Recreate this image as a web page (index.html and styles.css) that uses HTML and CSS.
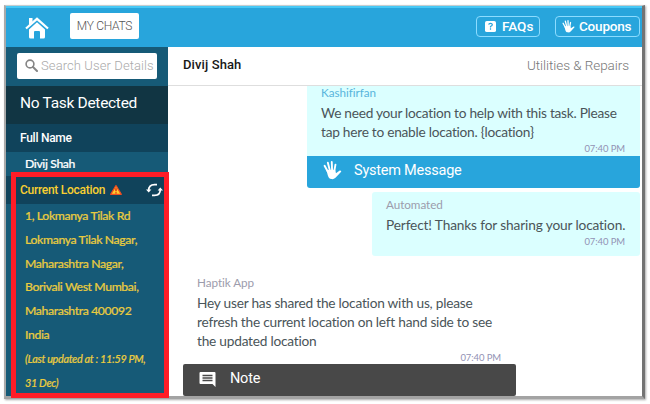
FILE: index.html
```html
<!DOCTYPE html>
<html lang="en">
<head>
<meta charset="utf-8">
<title>Chat support</title>
<link rel="stylesheet" href="styles.css">
</head>
<body>
<svg width="0" height="0" class="defs">
  <symbol id="hand" viewBox="0 0 18 18">
    <path d="M4.500 10 1.500 4.500M6.500 9 4.600 1.600M8.600 9 8.300 1M10.600 10l1.200-6.500" fill="none" stroke="currentColor" stroke-width="1.800" stroke-linecap="round"/>
    <path d="M3.200 8.600 11.500 8.300l.8 3.200 3.200-2.300c1-.6 2.400.3 1.500 1.300l-4.700 5c-1.200 1.300-2.700 1.900-4.200 1.600-2.100-.3-3-1.500-3.500-3.400z" fill="currentColor"/>
  </symbol>
</svg>
<div class="app">
  <header class="topbar">
    <svg class="home" viewBox="0 0 24 22"><path d="M1 11.500 12 1.800l11 9.700" fill="none" stroke="#fff" stroke-width="2.200"/><path d="M4 1h3.500v4L4 8zM4 12.500l8-7.200 8 7.200V20q0 1.500-1.500 1.500H15V15q0-1-1-1h-4q-1 0-1 1v6.500H5.500Q4 21.500 4 20z" fill="#fff"/></svg>
    <button class="chats"><span>MY CHATS</span></button>
    <div class="actions">
      <button class="action faq"><svg viewBox="0 0 12 12"><path d="M2 0h8q2 0 2 2v8q0 2-2 2H2q-2 0-2-2V2q0-2 2-2z" fill="#fff"/><path d="M4 4Q4.200 2.500 6 2.500T8 4Q8 4.900 6 6v1M6 8v1.500" stroke="#28a5dc" stroke-width="1.300" fill="none"/></svg><span>FAQs</span></button>
      <button class="action coupon"><svg viewBox="0 0 18 18"><use href="#hand"/></svg><span>Coupons</span></button>
    </div>
  </header>
  <div class="body">
    <aside class="sidebar">
      <div class="search-row"><div class="search"><svg viewBox="0 0 13 13"><circle cx="5" cy="5" r="3.900" fill="none" stroke="#858585" stroke-width="1.600"/><path d="m8 8 4 4" stroke="#858585" stroke-width="2" stroke-linecap="round"/></svg><span>Search User Details</span></div></div>
      <div class="task"><span>No Task Detected</span></div>
      <div class="label"><span>Full Name</span></div>
      <div class="value"><span>Divij Shah</span></div>
      <div class="label location"><span>Current Location</span>
        <svg class="warn" viewBox="0 0 12 10"><path d="M6 .7 11.300 9.300H.7z" fill="#ffcf2e" stroke="#f04d20" stroke-width="1.300" stroke-linejoin="round"/><path d="M6 3.200v3M6 7.200v1.300" stroke="#e02c15" stroke-width="1.500"/></svg>
        <svg class="refresh" viewBox="0 0 17 14"><path d="M2.700 7.500Q2.700 1.600 8.500 1.600H11M14.300 6.500Q14.300 12.400 8.500 12.400H6" fill="none" stroke="#fff" stroke-width="1.700"/><path d="M0 6.500h5.400L2.700 9.500zM11.600 7.500H17L14.300 4.500z" fill="#fff"/></svg>
      </div>
      <div class="address">
        <div><span>1, Lokmanya Tilak Rd</span></div>
        <div><span>Lokmanya Tilak Nagar,</span></div>
        <div><span>Maharashtra Nagar,</span></div>
        <div><span>Borivali West Mumbai,</span></div>
        <div><span>Maharashtra 400092</span></div>
        <div><span>India</span></div>
        <div class="updated"><span>(Last updated at : 11:59 PM,</span></div>
        <div class="updated"><span>31 Dec)</span></div>
      </div>
      <div class="highlight"></div>
    </aside>
    <main class="chat">
      <div class="chat-head"><strong>Divij Shah</strong><span class="category">Utilities &amp; Repairs</span></div>
      <div class="messages">
        <section class="message system">
          <div class="bubble"><div class="author blue">Kashifirfan</div><p>We need your location to help with this task. Please<br>tap here to enable location. {location}</p><time>07:40 PM</time></div>
          <div class="bar"><svg viewBox="0 0 18 18"><use href="#hand"/></svg><span>System Message</span></div>
        </section>
        <section class="message automated">
          <div class="author">Automated</div><p>Perfect! Thanks for sharing your location.</p><time>07:40 PM</time>
        </section>
        <section class="message note">
          <div class="author">Haptik App</div><p>Hey user has shared the location with us, please<br>refresh the current location on left hand side to see<br>the updated location</p><time>07:40 PM</time>
          <div class="bar"><svg viewBox="0 0 17 17"><path d="M1.500 1h14q1 0 1 1v14l-3-3h-12q-1 0-1-1V2q0-1 1-1z" fill="#fff"/><path d="M3.500 4.500h10M3.500 7h10M3.500 9.500h10" stroke="#484848" stroke-width="1.400"/></svg><span>Note</span></div>
        </section>
      </div>
    </main>
  </div>
</div>
</body>
</html>
```
FILE: styles.css
```css
* { box-sizing: border-box; }
body { margin: 0; width: 650px; height: 404px; padding: 5px 0 0 4px; background: #fff; overflow: hidden; font-family: Roboto, "Liberation Sans", sans-serif; }
.defs { position: absolute; }
button { font: inherit; margin: 0; padding: 0; }
span, strong { white-space: nowrap; }
.app { width: 641px; height: 394px; border: solid; border-width: 1px 3px 3px 2px; border-color: #c4cdd0 #737373 #a3a3a3 #aaa; display: flex; flex-direction: column; box-shadow: 1px 1px 2px #aaa; }
.topbar { height: 41px; flex: none; background: #28a5dc; border-top: 2px solid #48c8f5; display: flex; align-items: center; padding: 0 2px 2px 19px; }
.home { width: 24px; height: 22px; margin-top: 2px; }
.chats { width: 69px; height: 26px; margin: -2px 0 0 21px; border: 0; border-radius: 2px; background: #fff; color: #555; font-size: 12px; font-weight: 300; letter-spacing: -0.300px; }
.actions { margin-left: auto; display: flex; gap: 15px; }
.action { height: 21px; border: 1px solid #8cdcff; border-radius: 4px; background: none; color: #fff; font-size: 13.500px; font-weight: 500; display: flex; align-items: center; padding-bottom: 1px; }
.faq { width: 64px; padding-left: 8px; gap: 6px; }
.faq svg { width: 11px; height: 11px; }
.coupon { width: 85px; padding-left: 6px; gap: 4px; letter-spacing: -0.200px; }
.coupon svg { width: 13px; height: 13px; }
.body { flex: 1; display: flex; min-height: 0; }
.sidebar { position: relative; width: 162px; flex: none; background: #165a77; color: #fff; }
.search-row { height: 39px; padding: 6px 11px 0; }
.search { height: 26px; width: 140px; border-radius: 2px; background: #fff; display: flex; align-items: center; padding: 0 0 1px 8px; gap: 3px; font-size: 13px; font-weight: 300; color: #aaa; letter-spacing: 0.100px; }
.search svg { width: 13px; height: 13px; flex: none; }
.task { height: 38px; background: #113543; display: flex; align-items: center; padding: 0 0 4px 14px; font-size: 15.500px; letter-spacing: -0.300px; }
.label { height: 28px; background: #10435b; display: flex; align-items: center; padding-left: 14px; font-size: 12px; font-weight: 500; letter-spacing: -0.270px; }
.value { height: 24px; padding: 0 0 1px 19px; display: flex; align-items: center; font: 500 12.200px Lato, sans-serif; letter-spacing: -0.370px; -webkit-text-stroke: 0.200px; }
.location { color: #f8cf31; }
.warn { width: 12px; height: 10px; margin-left: 5px; }
.refresh { width: 17px; height: 14px; margin-left: auto; margin-right: 5px; }
.address { padding-left: 19px; color: #e8cb3f; font: 500 12.200px/23.800px Lato, sans-serif; letter-spacing: -0.370px; -webkit-text-stroke: 0.200px; }
.updated { font-size: 10.800px; font-style: italic; letter-spacing: -0.310px; }
.highlight { position: absolute; left: 5px; top: 125px; width: 158px; height: 226px; border: 5px solid #ff1d27; }
.chat { flex: 1; background: #fff; min-width: 0; }
.chat-head { height: 39px; border-bottom: 1px solid #dedede; display: flex; justify-content: space-between; align-items: center; padding: 0 13px 3px 15px; }
.chat-head strong { font-size: 13px; font-weight: 500; color: #171717; letter-spacing: 0.100px; }
.category { font-size: 13.500px; font-weight: 300; color: #777; letter-spacing: -0.060px; }
.messages { display: flex; flex-direction: column; align-items: flex-end; padding-right: 2px; font-family: Lato, sans-serif; }
.message { position: relative; }
.author { font-size: 11.700px; line-height: 12px; padding-bottom: 2px; color: #9c9cac; letter-spacing: -0.050px; }
.blue { color: #58b5dc; }
p { margin: 0; font-size: 13.700px; line-height: 19px; color: #4a5559; white-space: nowrap; letter-spacing: -0.260px; }
time { display: block; text-align: right; font-size: 9.500px; line-height: 12px; color: #9292b4; letter-spacing: -0.100px; }
.system { width: 333px; }
.bubble { height: 70px; background: #dbffff; padding: 0 15px 0 14px; }
.system p { margin-top: 3px; }
.system time { margin-top: 2px; }
.bar { height: 32px; background: #28a5dc; color: #fff; border-radius: 0 0 3px 3px; display: flex; align-items: center; padding: 0 0 4px 16px; gap: 12px; font: 400 14.500px Roboto, sans-serif; letter-spacing: -0.230px; }
.bar svg { width: 19px; height: 19px; }
.automated { width: 268px; height: 64px; margin-top: 4px; padding: 6px 15px 0 14px; background: #dbffff; border-radius: 3px; }
.automated p { margin-top: 3px; letter-spacing: -0.140px; }
.automated time { margin-top: 2px; }
.note { align-self: flex-start; width: 333px; margin: 20px 0 0 15px; }
.note .author { padding-left: 14px; }
.note p { margin-top: 3px; padding-left: 14px; letter-spacing: -0.230px; }
.note time { margin-top: 2px; padding-right: 15px; }
.note .bar { background: #484848; border-radius: 2px; gap: 14px; }
.note .bar svg { width: 17px; height: 17px; margin-top: 2px; }
```
